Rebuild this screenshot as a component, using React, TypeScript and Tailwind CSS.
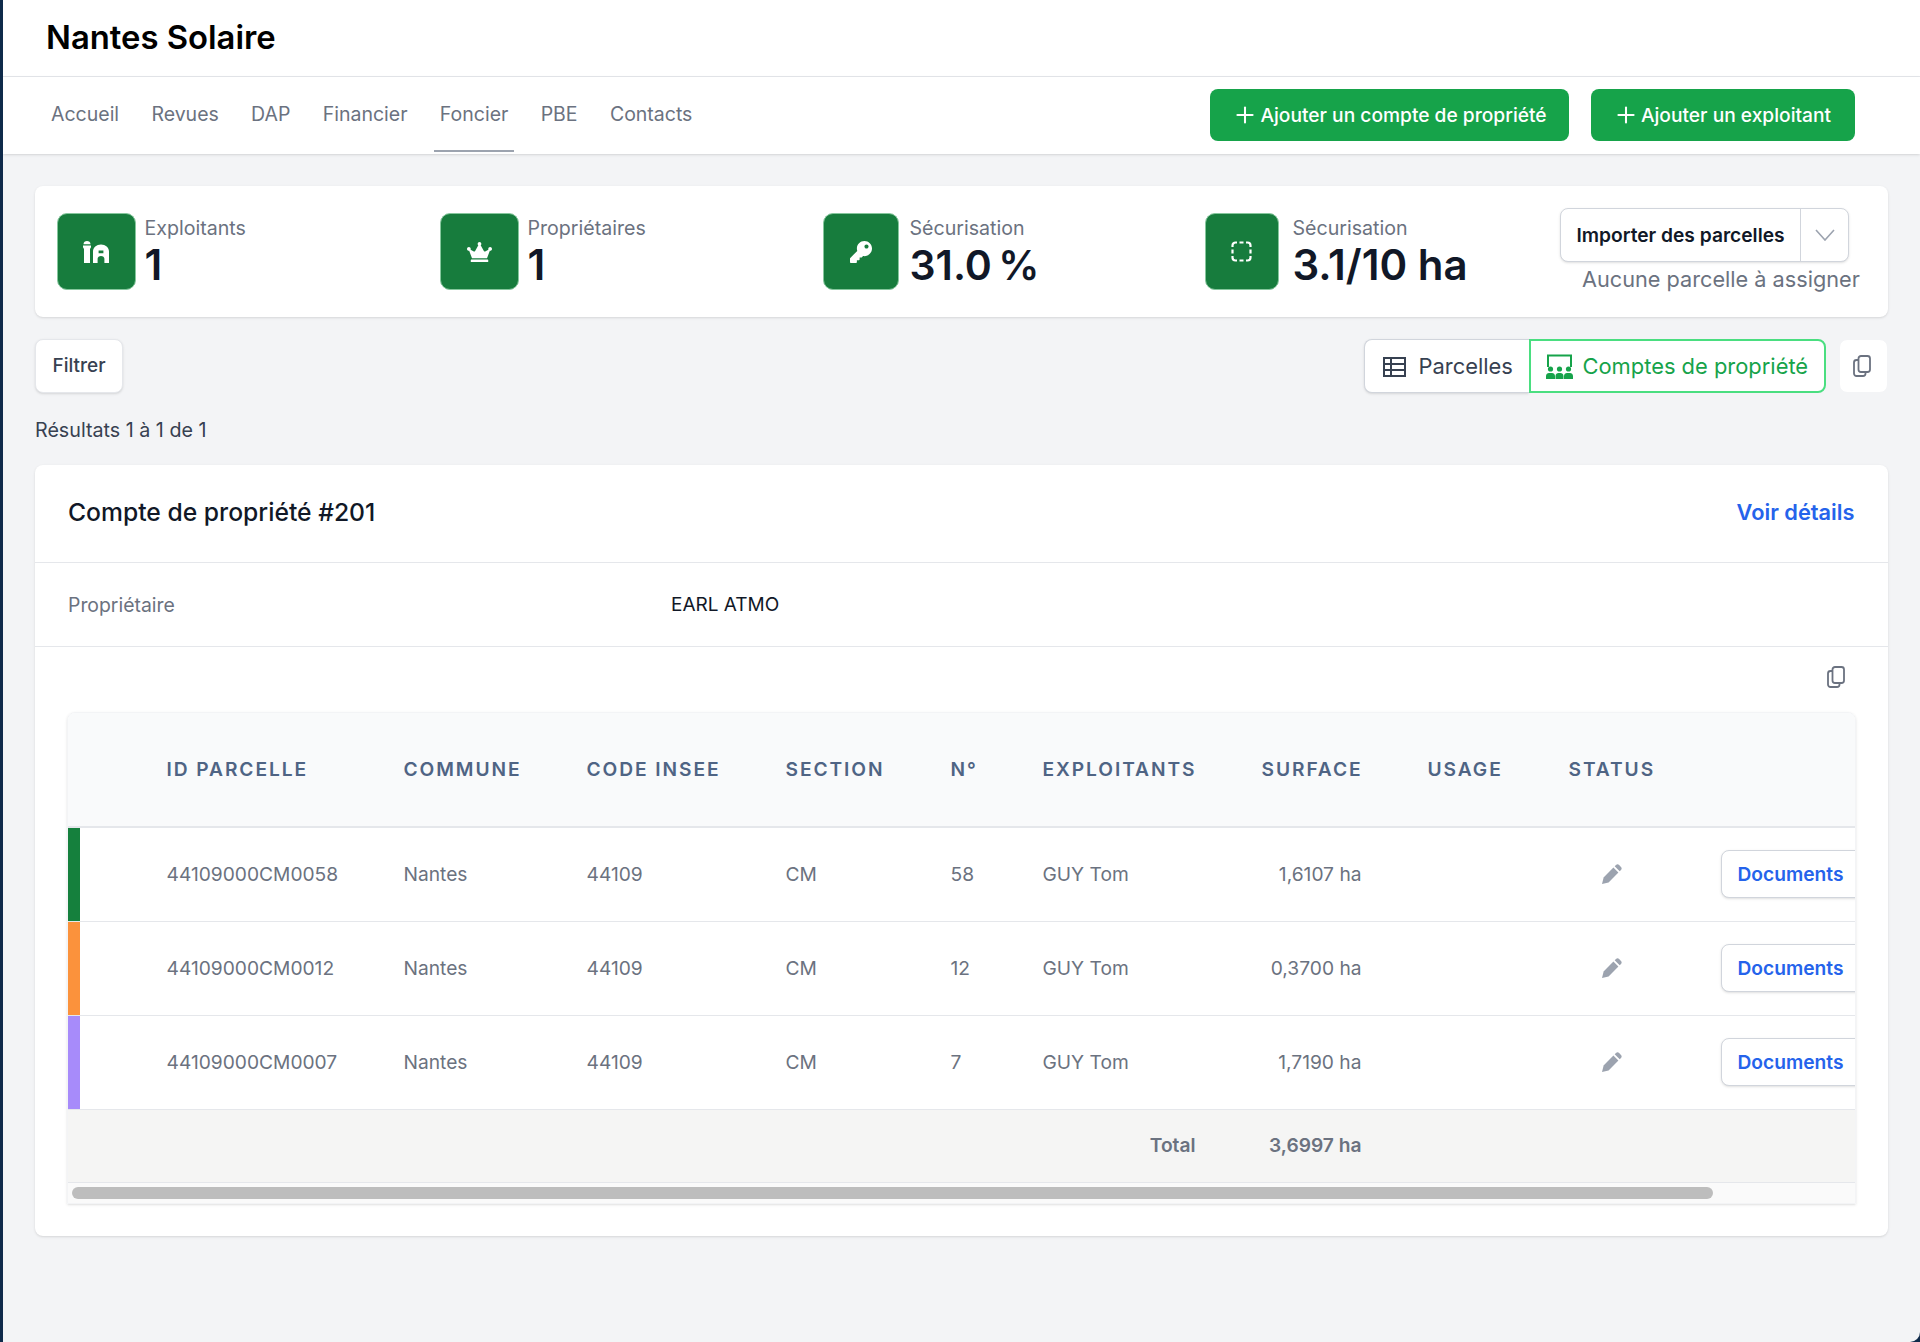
import React from 'react';
import { Plus } from 'lucide-react';
import { FaCrown, FaKey } from 'react-icons/fa';

const navItems = ['Accueil', 'Revues', 'DAP', 'Financier', 'Foncier', 'PBE', 'Contacts'];

const rows = [
  { id: '44109000CM0058', num: '58', surface: '1,6107 ha', color: 'bg-[#15803d]' },
  { id: '44109000CM0012', num: '12', surface: '0,3700 ha', color: 'bg-[#fb923c]' },
  { id: '44109000CM0007', num: '7', surface: '1,7190 ha', color: 'bg-[#a78bfa]' },
];

const BarnIcon = () => (
  <svg viewBox="0 0 26 22" className="w-[26px] h-[22px]" fill="white">
    <path d="M0.5 3.2C0.5 1.2 2.2 0 4 0s3.5 1.2 3.5 3.2z" />
    <path d="M0 4.6h8v1.6L7 8v14H1V8L0 6.2z" />
    <path
      fillRule="evenodd"
      d="M10 22V10.5C10 6.5 13.5 3.6 18 3.6s8 2.9 8 6.9V22h-4.6v-4.2c0-1.6-1.5-2.9-3.4-2.9s-3.4 1.3-3.4 2.9V22zM15.6 9.4h4.8v2.8h-4.8z"
    />
  </svg>
);

const DashedSquare = () => (
  <svg viewBox="0 0 21 21" className="w-[21px] h-[21px]" fill="none" stroke="white" strokeWidth="2.2">
    <path d="M1.5 6V4.5a3 3 0 0 1 3-3H6M8.5 1.5h4M15 1.5h1.5a3 3 0 0 1 3 3V6M19.5 8.5v4M19.5 15v1.5a3 3 0 0 1-3 3H15M12.5 19.5h-4M6 19.5H4.5a3 3 0 0 1-3-3V15M1.5 12.5v-4" />
  </svg>
);

const TableIcon = () => (
  <svg viewBox="0 0 23 20" className="w-[23px] h-5" fill="none" stroke="#374151" strokeWidth="2">
    <rect x="1" y="1" width="21" height="18" />
    <path d="M1 7h21M1 13h21M8 1v18" />
  </svg>
);

const RoomIcon = () => (
  <svg viewBox="0 0 27 26" className="w-[27px] h-[26px]" fill="#16a34a">
    <path d="M2 13V1.5h23V13" fill="none" stroke="#16a34a" strokeWidth="2" />
    <circle cx="4.5" cy="15" r="2.6" />
    <circle cx="13.5" cy="15" r="2.6" />
    <circle cx="22.5" cy="15" r="2.6" />
    <path d="M0 25v-3c0-2 1.5-3 3-3h3c1.5 0 3 1 3 3v3zM9.5 25v-3c0-2 1.5-3 3-3h2c1.5 0 3 1 3 3v3zM18 25v-3c0-2 1.5-3 3-3h3c1.5 0 3 1 3 3v3z" />
  </svg>
);

const CopyIcon = () => (
  <svg viewBox="0 0 18 22" className="w-[18px] h-[22px]" fill="none" stroke="#6b7280" strokeWidth="1.8" strokeLinejoin="round">
    <rect x="1" y="5" width="11.5" height="16" rx="2.5" />
    <rect x="5.5" y="1" width="11.5" height="16" rx="2.5" fill="white" />
  </svg>
);

const PencilIcon = () => (
  <svg viewBox="0 0 20 20" className="ml-[33px] w-[20px] h-[20px]" fill="#9ca3af">
    <path d="M0 20l1.6-6.6L11.4 3.6l5 5-9.8 9.8z" />
    <path d="M12.7 2.3l1.3-1.3c.9-.9 2.2-.9 3.1 0l1.9 1.9c.9.9.9 2.2 0 3.1l-1.3 1.3z" />
  </svg>
);

const Stat = ({
  icon,
  label,
  value,
  width,
  gap = 'gap-[9px]',
  valueClass = 'text-[42px]',
}: {
  icon: React.ReactNode;
  label: string;
  value: string;
  width: string;
  gap?: string;
  valueClass?: string;
}) => (
  <div className={`flex ${gap}`}>
    <div className={`${width} h-[77px] rounded-[10px] bg-[#177c3d] border border-[#86c79d] flex items-center justify-center`}>
      {icon}
    </div>
    <div>
      <div className="text-[19.6px] leading-[24px] mt-[3px] text-[#6b7280]">{label}</div>
      <div className={`leading-[50px] font-semibold text-[#111827] ${valueClass}`}>{value}</div>
    </div>
  </div>
);

const App = () => {
  return (
    <div className="w-[1920px] h-[1342px] overflow-hidden bg-[#0f2a4a] pl-[2.5px] font-['Inter',sans-serif]">
      <div className="h-full bg-[#f3f4f6] rounded-br-[10px] overflow-hidden">
        <div className="h-[77px] bg-white border-b border-gray-200 pl-[43.5px] flex items-center">
          <h1 className="text-[32.8px] font-semibold text-black">Nantes Solaire</h1>
        </div>

        <div className="h-[77px] bg-white shadow-sm flex items-start justify-between pl-[42.5px] pr-[65px]">
          <div className="flex h-[75px] gap-[20.3px]">
            {navItems.map((item) => (
              <div
                key={item}
                className={`px-[6px] pt-[2px] flex items-center text-[19.5px] text-[#6b7280] border-b-2 ${item === 'Foncier' ? 'border-[#9ca3af]' : 'border-transparent'}`}
              >
                {item}
              </div>
            ))}
          </div>
          <div className="flex gap-[22px] mt-[12px]">
            <button className="h-[52px] w-[359px] rounded-lg bg-[#16a34a] text-white text-[19.2px] font-medium flex items-center justify-center">
              <Plus className="w-[26px] h-[26px] mr-[2px]" strokeWidth={1.9} />
              Ajouter un compte de propriété
            </button>
            <button className="h-[52px] w-[264px] rounded-lg bg-[#16a34a] text-white text-[19.2px] font-medium flex items-center justify-center pr-[2px]">
              <Plus className="w-[26px] h-[26px] mr-[2px]" strokeWidth={1.9} />
              Ajouter un exploitant
            </button>
          </div>
        </div>

        <div className="pl-[32.5px] pr-[32.5px] pt-[32px]">
          <div className="h-[131px] bg-white rounded-lg shadow flex pl-[21.5px] pt-[22px]">
            <div className="grid grid-cols-[383px_383px_382px_355.5px] pt-[5px]">
              <Stat icon={<BarnIcon />} label="Exploitants" value="1" width="w-[79px]" />
              <Stat icon={<FaCrown className="w-[25px] h-[20px] text-white" />} label="Propriétaires" value="1" width="w-[79px]" />
              <Stat icon={<FaKey className="w-[22px] h-[22px] text-white" />} label="Sécurisation" value="31.0 %" width="w-[76px]" gap="gap-[11px]" valueClass="text-[41px] [word-spacing:-4px]" />
              <Stat icon={<DashedSquare />} label="Sécurisation" value="3.1/10 ha" width="w-[74px]" gap="gap-[14px]" />
            </div>
            <div>
              <div className="flex w-[289px] h-[54px] bg-white border border-gray-300 rounded-lg shadow-sm">
                <div className="w-[240px] border-r border-gray-300 flex items-center justify-center text-[19.2px] font-semibold text-[#111827]">
                  Importer des parcelles
                </div>
                <div className="flex-1 flex items-center justify-center">
                  <svg viewBox="0 0 20 12" className="w-[20px] h-[12px]" fill="none" stroke="#9ca3af" strokeWidth="1.6">
                    <path d="M1 1l9 10 9-10" />
                  </svg>
                </div>
              </div>
              <div className="mt-[3px] ml-[22px] text-[21.7px] leading-[28px] whitespace-nowrap text-[#6b7280]">
                Aucune parcelle à assigner
              </div>
            </div>
          </div>

          <div className="mt-[22px] flex items-center justify-between">
            <button className="w-[88px] h-[54px] pt-[1px] bg-white border border-gray-200 rounded-lg shadow-sm text-[19px] font-medium text-[#374151]">
              Filtrer
            </button>
            <div className="flex items-center gap-[13px]">
              <div className="flex h-[54px] text-[21.9px]">
                <div className="w-[165px] bg-white border border-gray-300 border-r-0 rounded-l-lg shadow-sm flex items-center gap-[13px] pl-[18px] pt-[1px] text-[#374151]">
                  <TableIcon />
                  Parcelles
                </div>
                <div className="w-[297px] bg-white border-2 border-[#4ade80] rounded-r-lg flex items-center gap-[10px] pl-[15px] pt-[1px] text-[#16a34a]">
                  <RoomIcon />
                  Comptes de propriété
                </div>
              </div>
              <div className="w-[49px] h-[54px] pr-[3px] bg-white rounded-lg border border-gray-100 flex items-center justify-center">
                <CopyIcon />
              </div>
            </div>
          </div>

          <div className="mt-[25px] text-[19.7px] leading-[24px] text-[#374151]">Résultats 1 à 1 de 1</div>

          <div className="mt-[23px] bg-white rounded-lg shadow">
            <div className="h-[98px] border-b border-gray-200 flex items-center justify-between px-[33px] pb-[2px]">
              <h2 className="text-[24.7px] font-medium text-[#111827]">Compte de propriété #201</h2>
              <a className="text-[21.8px] font-semibold text-[#2563eb]">Voir détails</a>
            </div>
            <div className="h-[84px] border-b border-gray-200 flex items-center pl-[33px] pt-[2px] text-[19px]">
              <div className="w-[603px] text-[19.4px] text-[#6b7280]">Propriétaire</div>
              <div className="text-[#111827]">EARL ATMO</div>
            </div>
            <div className="h-[65px] flex items-center justify-end pr-[43px] pb-[5px]">
              <CopyIcon />
            </div>

            <div className="mx-[32px] rounded-t-lg border border-gray-100 shadow overflow-hidden">
              <table className="table-fixed w-[1823px] text-[19.2px] text-[#6b7280]">
                <colgroup>
                  <col className="w-[12px]" />
                  <col className="w-[86.5px]" />
                  <col className="w-[237px]" />
                  <col className="w-[183px]" />
                  <col className="w-[199px]" />
                  <col className="w-[165px]" />
                  <col className="w-[92px]" />
                  <col className="w-[219px]" />
                  <col className="w-[100px]" />
                  <col className="w-[207px]" />
                  <col className="w-[152px]" />
                  <col className="w-[170.5px]" />
                </colgroup>
                <thead>
                  <tr className="h-[114px] bg-[#f9fafb] border-b-2 border-gray-200 text-left tracking-[0.1em] text-[#4f6484]">
                    <th colSpan={2}></th>
                    <th className="font-semibold">ID PARCELLE</th>
                    <th className="font-semibold">COMMUNE</th>
                    <th className="font-semibold">CODE INSEE</th>
                    <th className="font-semibold">SECTION</th>
                    <th className="font-semibold">N°</th>
                    <th className="font-semibold">EXPLOITANTS</th>
                    <th className="font-semibold text-right">SURFACE</th>
                    <th className="font-semibold pl-[66px]">USAGE</th>
                    <th className="font-semibold">STATUS</th>
                    <th></th>
                  </tr>
                </thead>
                <tbody>
                  {rows.map((row) => (
                    <tr key={row.id} className="h-[94px] border-b border-gray-200">
                      <td className={row.color}></td>
                      <td></td>
                      <td>{row.id}</td>
                      <td>Nantes</td>
                      <td>44109</td>
                      <td>CM</td>
                      <td>{row.num}</td>
                      <td>GUY Tom</td>
                      <td className="text-right">{row.surface}</td>
                      <td></td>
                      <td>
                        <PencilIcon />
                      </td>
                      <td>
                        <button className="w-[160px] h-[48px] bg-white border border-gray-300 rounded-lg shadow-sm text-left pl-[16px] font-semibold text-[#2563eb]">
                          Documents
                        </button>
                      </td>
                    </tr>
                  ))}
                </tbody>
                <tfoot>
                  <tr className="h-[73px] bg-[#f5f5f4] border-b border-gray-200 font-semibold">
                    <td colSpan={8} className="text-right pr-[66px]">Total</td>
                    <td className="text-right whitespace-nowrap">3,6997 ha</td>
                    <td colSpan={3}></td>
                  </tr>
                </tfoot>
              </table>
              <div className="h-[20px] bg-[#fafafa] pt-[4px] pl-[4px]">
                <div className="w-[1641px] h-[12px] rounded-full bg-[#bdbdbd]"></div>
              </div>
            </div>
            <div className="h-[32px]"></div>
          </div>
        </div>
      </div>
    </div>
  );
};

export default App;
